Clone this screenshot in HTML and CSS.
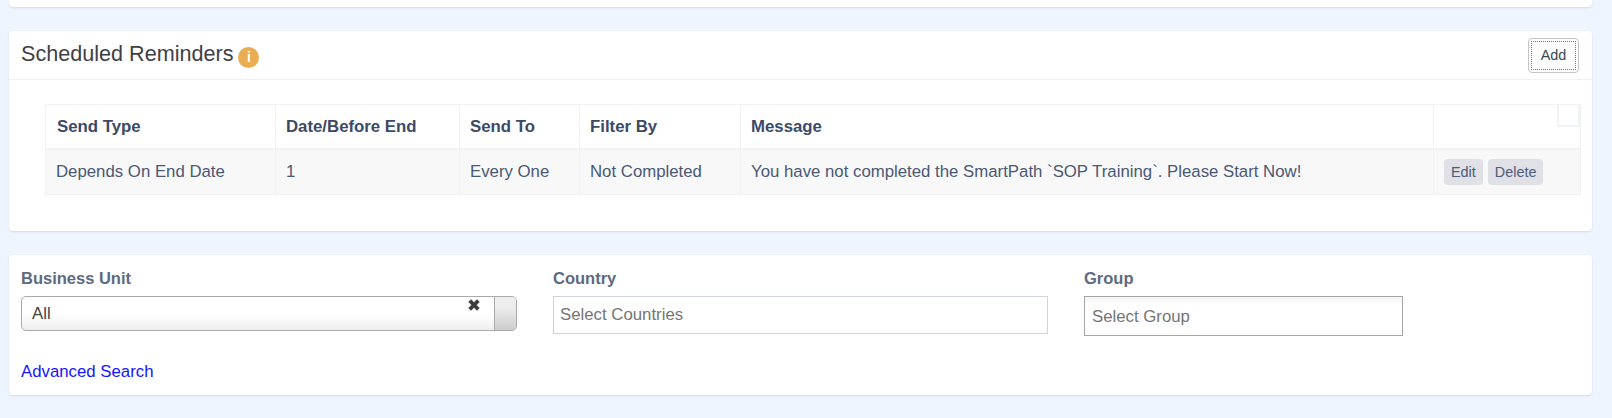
FILE: index.html
```html
<!DOCTYPE html>
<html lang="en">
<head>
<meta charset="utf-8">
<title>Scheduled Reminders</title>
<link rel="stylesheet" href="styles.css">
</head>
<body>
<div class="card card-top"></div>
<section class="card reminders">
  <header class="card-head">
    <h2 class="title">Scheduled Reminders</h2>
    <span class="info">i</span>
    <button class="btn-add" type="button"><span class="btn-add-focus">Add</span></button>
  </header>
  <div class="table-wrap">
    <table class="grid">
      <colgroup>
        <col class="c1"><col class="c2"><col class="c3"><col class="c4"><col class="c5"><col class="c6">
      </colgroup>
      <thead>
        <tr>
          <th>Send Type</th>
          <th>Date/Before End</th>
          <th>Send To</th>
          <th>Filter By</th>
          <th>Message</th>
          <th class="last"><span class="corner"></span></th>
        </tr>
      </thead>
      <tbody>
        <tr>
          <td>Depends On End Date</td>
          <td>1</td>
          <td>Every One</td>
          <td>Not Completed</td>
          <td>You have not completed the SmartPath `SOP Training`. Please Start Now!</td>
          <td class="actions"><button class="btn-sm" type="button">Edit</button><button class="btn-sm" type="button">Delete</button></td>
        </tr>
      </tbody>
    </table>
  </div>
</section>
<section class="card filters">
  <div class="filter-row">
    <div class="field f-unit">
      <label class="label">Business Unit</label>
      <div class="chosen">
        <span class="chosen-text">All</span>
        <svg class="chosen-x" width="12" height="12" viewBox="0 0 12 12"><path d="M.6 3 3 .6 6 3.6 9 .6 11.4 3 8.4 6 11.4 9 9 11.4 6 8.4 3 11.4 .6 9 3.6 6Z" fill="#3a3a3a" stroke="#3a3a3a" stroke-width=".5" stroke-linejoin="round"/></svg>
        <span class="chosen-arrow"></span>
      </div>
    </div>
    <div class="field f-country">
      <label class="label">Country</label>
      <div class="box box-country">Select Countries</div>
    </div>
    <div class="field f-group">
      <label class="label">Group</label>
      <div class="box box-group">Select Group</div>
    </div>
  </div>
  <a class="adv" href="#">Advanced Search</a>
</section>
</body>
</html>
```
FILE: styles.css
```css
* { box-sizing: border-box; }
html, body { margin: 0; padding: 0; }
body {
  background: #eef5fe;
  font-family: "Liberation Sans", Arial, sans-serif;
  height: 418px;
  overflow: hidden;
  padding: 0 20px 0 9px;
  display: flex;
  flex-direction: column;
  gap: 24px;
}
.card {
  background: #fff;
  border-radius: 4px;
  box-shadow: 0 1px 2px rgba(60, 80, 120, .16);
}
.card-top { height: 7px; border-radius: 0 0 4px 4px; flex: none; }
.reminders { height: 200px; flex: none; }
.card-head {
  height: 49px;
  border-bottom: 1px solid #f0f1f3;
  display: flex;
  align-items: center;
  padding: 0 13px 0 12px;
}
.title {
  margin: 0;
  font-size: 21.6px;
  font-weight: 400;
  color: #3f4047;
  line-height: 1;
  padding-bottom: 2px;
}
.info {
  width: 21px;
  height: 21px;
  margin: 4px 0 0 5px;
  border-radius: 50%;
  background: #ebad52;
  color: #fff;
  font-size: 14px;
  font-weight: 700;
  line-height: 21px;
  text-align: center;
}
.btn-add {
  margin-left: auto;
  width: 51px;
  height: 35px;
  padding: 2px;
  background: #fff;
  border: 1px solid #c4c4c4;
  border-radius: 4px;
  font: 14.4px "Liberation Sans", Arial, sans-serif;
  color: #354a50;
}
.btn-add-focus {
  display: block;
  height: 29px;
  line-height: 29px;
  background:
    repeating-linear-gradient(90deg, #777 0 1px, transparent 1px 2px) top / 100% 1px no-repeat,
    repeating-linear-gradient(90deg, #777 0 1px, transparent 1px 2px) bottom / 100% 1px no-repeat,
    repeating-linear-gradient(0deg, #777 0 1px, transparent 1px 2px) left / 1px 100% no-repeat,
    repeating-linear-gradient(0deg, #777 0 1px, transparent 1px 2px) right / 1px 100% no-repeat;
}
.table-wrap { padding: 24px 12px 0 36px; }
.grid {
  width: 1535px;
  table-layout: fixed;
  border-collapse: collapse;
  font-size: 16.8px;
}
.c1 { width: 230px; }
.c2 { width: 184px; }
.c3 { width: 120px; }
.c4 { width: 161px; }
.c5 { width: 693px; }
.c6 { width: 147px; }
.grid th, .grid td {
  border: 1px solid #f1f2f4;
  padding: 0 10px;
  text-align: left;
  white-space: nowrap;
}
.grid th {
  height: 44px;
  padding-top: 2px;
  color: #3c4a68;
  font-weight: 700;
  border-bottom: 2px solid #f1f2f4;
}
.grid th:first-child { padding-left: 11px; }
.grid td {
  height: 46px;
  color: #4a5874;
  background: #f8f8f9;
}
.last { position: relative; }
.corner {
  position: absolute;
  top: 0;
  right: 0;
  width: 23px;
  height: 22px;
  border: 2px solid #f1f2f4;
  border-width: 0 2px 2px 2px;
  background: #fff;
}
.grid td.actions { padding: 0 0 0 10px; }
.btn-sm {
  height: 26px;
  padding: 0 7px;
  margin-right: 5px;
  border: 0;
  border-radius: 4px;
  background: #dfe1e7;
  color: #4e5a78;
  font: 14.4px "Liberation Sans", Arial, sans-serif;
}
.filters {
  height: 140px;
  flex: none;
  padding: 15px 12px 0;
}
.filter-row { display: flex; align-items: flex-start; height: 82px; }
.field { display: flex; flex-direction: column; }
.f-unit { width: 532px; }
.f-country { width: 531px; }
.f-group { width: 319px; }
.label {
  font-size: 16.5px;
  line-height: 17px;
  font-weight: 700;
  color: #5e6a82;
  margin-bottom: 9px;
}
.chosen {
  position: relative;
  width: 496px;
  height: 35px;
  border: 1px solid #aaa;
  border-radius: 5px;
  background: linear-gradient(#fff 0, #fff 50%, #eee 100%);
  font-size: 16.8px;
  line-height: 33px;
  color: #444;
  padding-left: 10px;
}
.chosen-x { position: absolute; top: 2px; right: 36px; }
.chosen-arrow {
  position: absolute;
  top: 0;
  right: 0;
  bottom: 0;
  width: 22px;
  border-left: 1px solid #aaa;
  border-radius: 0 4px 4px 0;
  background: linear-gradient(#eee 30%, #ccc 100%);
}
.box {
  font-size: 16.8px;
  color: #757575;
  padding-left: 6px;
}
.box-country {
  width: 495px;
  height: 38px;
  line-height: 35px;
  border: 1px solid #cfd4dc;
}
.box-group {
  width: 319px;
  height: 40px;
  line-height: 39px;
  padding-left: 7px;
  border: 1px solid #a6a6a6;
  background: linear-gradient(#f3f3f3 0, #fff 8px);
}
.adv {
  display: block;
  margin-top: 11px;
  font-size: 16.8px;
  line-height: 18px;
  color: #1414ff;
  text-decoration: none;
}
```
